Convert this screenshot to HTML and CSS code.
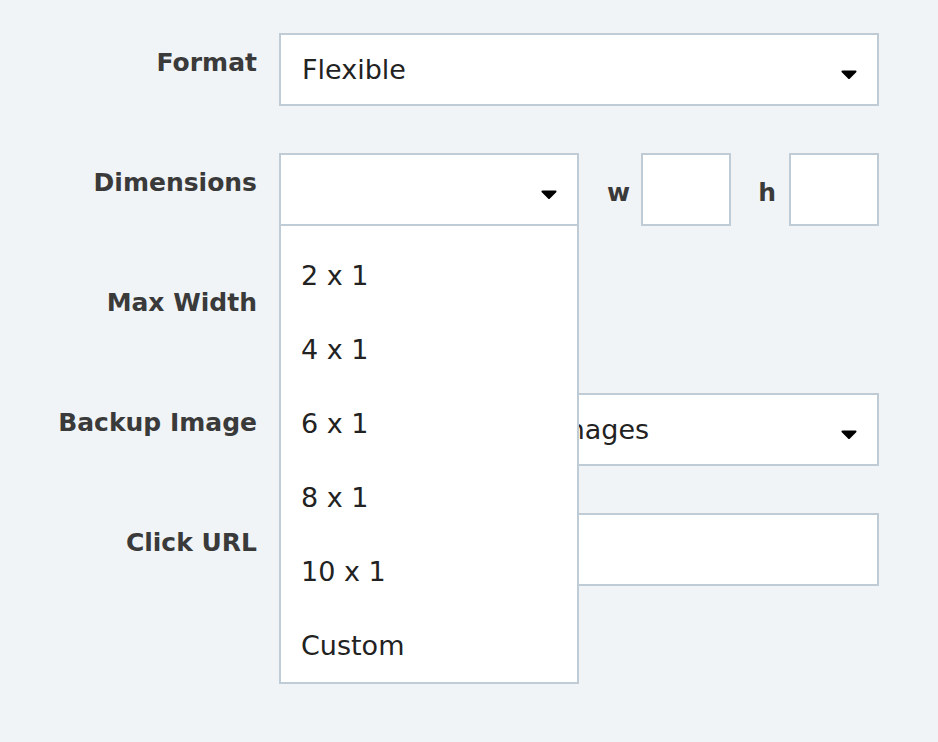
FILE: index.html
```html
<!DOCTYPE html>
<html lang="en">
<head>
    <meta charset="UTF-8">
    <meta name="viewport" content="width=device-width, initial-scale=1.0">
    <title>Ad Unit Settings</title>
    <link rel="stylesheet" href="styles.css">
</head>
<body>
    <div class="form">
        <label class="field-label">Format</label>
        <div class="select">
            <span class="select-value">Flexible</span>
            <svg class="caret" viewBox="0 0 16 9"><path d="M1.5 1.5 L14.5 1.5 L8 8 Z"/></svg>
        </div>

        <label class="field-label">Dimensions</label>
        <div class="dims">
            <div class="select-wrap">
                <div class="select">
                    <span class="select-value"></span>
                    <svg class="caret" viewBox="0 0 16 9"><path d="M1.5 1.5 L14.5 1.5 L8 8 Z"/></svg>
                </div>
                <ul class="dropdown">
                    <li>2 x 1</li>
                    <li>4 x 1</li>
                    <li>6 x 1</li>
                    <li>8 x 1</li>
                    <li>10 x 1</li>
                    <li>Custom</li>
                </ul>
            </div>
            <label class="dim-label dim-w">w</label>
            <input class="text-input" type="text">
            <label class="dim-label dim-h">h</label>
            <input class="text-input" type="text">
        </div>

        <label class="field-label">Max Width</label>
        <div>
            <input class="text-input short" type="text">
        </div>

        <label class="field-label">Backup Image</label>
        <div class="select">
            <span class="select-value">Generated from 3 images</span>
            <svg class="caret" viewBox="0 0 16 9"><path d="M1.5 1.5 L14.5 1.5 L8 8 Z"/></svg>
        </div>

        <label class="field-label">Click URL</label>
        <input class="text-input" type="text">
    </div>
</body>
</html>
```

FILE: styles.css
```css
html, body {
    min-height: 100%;
}
body {
    font-family: 'DejaVu Sans', Verdana, sans-serif;
    margin: 0;
    min-height: 100vh;
    background-color: #f0f4f7;
}
.form {
    display: grid;
    grid-template-columns: 257px 600px;
    column-gap: 22px;
    row-gap: 47px;
    padding: 33px 0 120px 0;
}
.field-label {
    text-align: right;
    font-weight: bold;
    font-size: 25px;
    line-height: 30px;
    padding-top: 15px;
    color: #3a3a3a;
}
.select {
    display: flex;
    align-items: center;
    justify-content: space-between;
    box-sizing: border-box;
    height: 73px;
    padding: 0 20px 0 21px;
    background: white;
    border: 2px solid #bfcbd5;
}
.select-value {
    font-size: 27px;
    color: #222;
    white-space: nowrap;
    overflow: hidden;
}
.caret {
    flex: none;
    width: 16px;
    height: 9px;
    margin-top: 9px;
}
.caret path {
    fill: #000;
    stroke: #000;
    stroke-width: 2;
    stroke-linejoin: round;
}
.text-input {
    display: block;
    box-sizing: border-box;
    width: 100%;
    height: 73px;
    margin: 0;
    background: white;
    border: 2px solid #bfcbd5;
    border-radius: 0;
    font-family: inherit;
    font-size: 27px;
}
.text-input.short {
    width: 200px;
}
.dims {
    display: grid;
    grid-template-columns: 300px 62px 90px 58px 90px;
    align-items: center;
}
.select-wrap {
    position: relative;
}
.dim-label {
    text-align: right;
    font-weight: bold;
    font-size: 25px;
    color: #3a3a3a;
    margin-top: 6px;
}
.dim-w {
    padding-right: 11px;
}
.dim-h {
    padding-right: 13px;
}
.dropdown {
    position: absolute;
    top: 100%;
    left: 0;
    z-index: 10;
    box-sizing: border-box;
    width: 100%;
    margin: 0;
    padding: 12px 0 0 0;
    list-style: none;
    background: white;
    border: 2px solid #bfcbd5;
    border-top: 0;
}
.dropdown li {
    display: flex;
    align-items: center;
    height: 74px;
    padding-left: 20px;
    font-size: 27px;
    color: #222;
}
```
